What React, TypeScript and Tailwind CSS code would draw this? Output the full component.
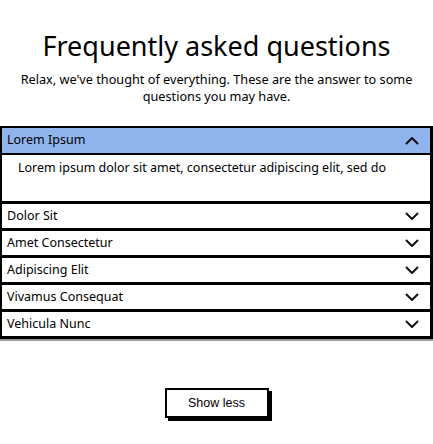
const items = ["Dolor Sit", "Amet Consectetur", "Adipiscing Elit", "Vivamus Consequat", "Vehicula Nunc"];

function Chevron({ up = false }: { up?: boolean }) {
  return (
    <svg width="14" height="9" viewBox="0 0 14 9" fill="none" stroke="#111" strokeWidth="2" strokeLinecap="round" strokeLinejoin="round">
      {up ? <polyline points="1.5,7.5 7,2 12.5,7.5" /> : <polyline points="1.5,1.5 7,7 12.5,1.5" />}
    </svg>
  );
}

export default function App() {
  return (
    <div className="w-[433px] h-[444px] bg-white text-black font-['Noto_Sans',sans-serif]">
      {/* Header */}
      <div className="pt-[28px] text-center">
        <h1 className="text-[27px] leading-[36px]">Frequently asked questions</h1>
        <p className="mt-[7px] px-[12px] text-[12.7px] leading-[17px]">
          Relax, we've thought of everything. These are the answer to some questions you may have.
        </p>
      </div>

      {/* Accordion */}
      <div className="mt-[21px] border-[2px] border-black border-r-[3px] border-b-[3px] shadow-[0_2px_0_#999]">
        <div className="h-[25px] flex items-center justify-between pl-[5px] pr-[11px] bg-[#8fb4ee] text-[12.5px]">
          <span>Lorem Ipsum</span>
          <Chevron up />
        </div>
        <div className="h-[48px] border-t-[2px] border-black pl-[16px] pt-[4px] text-[12.5px]">
          Lorem ipsum dolor sit amet, consectetur adipiscing elit, sed do
        </div>
        {items.map((t) => (
          <div key={t} className="h-[27px] border-t-[3px] border-black flex items-center justify-between pl-[5px] pr-[11px] text-[12.5px]">
            <span>{t}</span>
            <Chevron />
          </div>
        ))}
      </div>

      {/* Button */}
      <div className="mt-[49px] flex justify-center">
        <button className="w-[104px] h-[30px] border-[2px] border-black bg-white shadow-[3px_3px_0_#000] text-[12.5px] font-['Liberation_Sans',sans-serif]">
          Show less
        </button>
      </div>
    </div>
  );
}
